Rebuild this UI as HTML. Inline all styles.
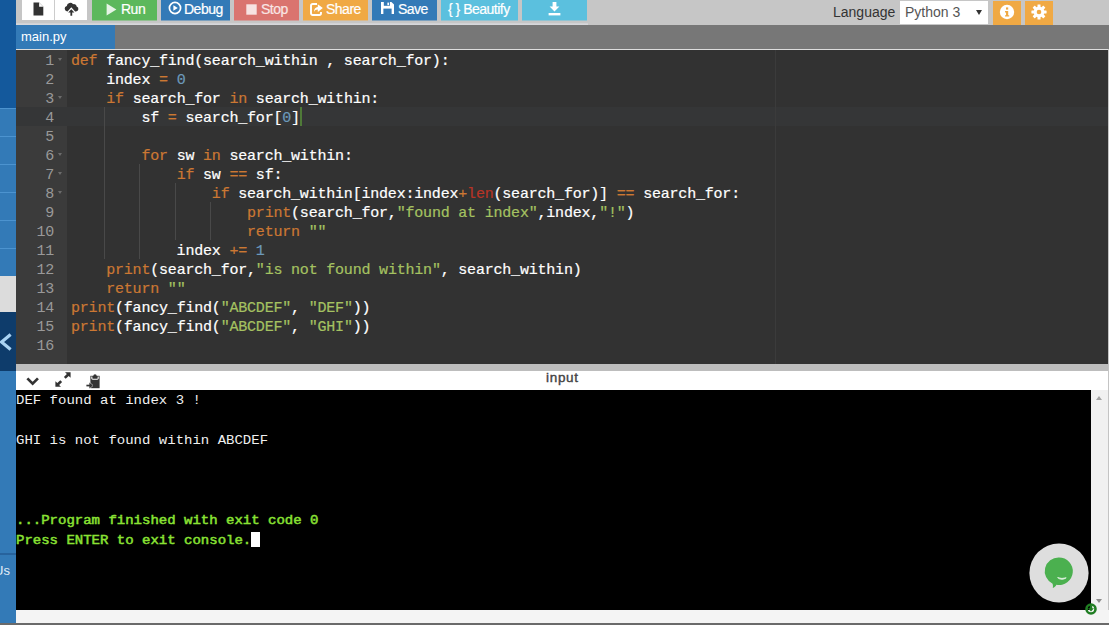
<!DOCTYPE html>
<html lang="en">
<head>
<meta charset="utf-8">
<title>main.py - Online Python 3 IDE</title>
<style>
html,body{margin:0;padding:0;}
body{width:1109px;height:625px;overflow:hidden;position:relative;background:#c6c6c6;font-family:"Liberation Sans",Arial,sans-serif;font-size:14px;color:#333;}
.abs{position:absolute;}
/* sidebar */
#side{left:0;top:0;width:16px;height:625px;background:#14599c;overflow:hidden;}
#side div{position:absolute;left:0;width:16px;}
/* toolbar */
#tb{left:16px;top:0;width:1093px;height:25px;background:#c6c6c6;}
.btn{position:absolute;top:-10px;height:30px;box-sizing:border-box;color:#fff;font-size:14px;letter-spacing:-0.5px;line-height:38px;-webkit-text-stroke:0.2px;white-space:nowrap;}
.btn svg{position:absolute;}
.btn span{position:absolute;top:0;}
/* tabs */
#tabs{left:16px;top:25px;width:1093px;height:24px;background:#777;}
#tab1{left:0;top:0;width:99px;height:24px;background:#337ab7;color:#fff;font-size:13px;line-height:23px;}
/* editor */
#ed{left:16px;top:49px;width:1092px;height:315px;background:#323232;overflow:hidden;border-top:1px solid #ddd;box-sizing:border-box;}
#gut{left:0;top:0;width:51px;height:314px;background:#3b3b3b;}
.ln{position:absolute;left:0;width:38px;text-align:right;height:19px;line-height:19px;margin-top:2px;color:#999;font-family:"Liberation Mono","DejaVu Sans Mono",monospace;font-size:15px;letter-spacing:-0.2px;}
.cl{position:absolute;left:55px;height:19px;line-height:19px;margin-top:2px;color:#fff;font-family:"Liberation Mono","DejaVu Sans Mono",monospace;font-size:15px;letter-spacing:-0.2px;white-space:pre;-webkit-text-stroke:0.2px;}
.k{color:#cc7833;}.n{color:#6c99bb;}.s{color:#a5c261;}.f{color:#b83426;}
.ig{position:absolute;width:1px;background:#494949;}
.fold{position:absolute;left:42px;width:0;height:0;border-left:2.700px solid transparent;border-right:2.700px solid transparent;border-top:3.500px solid #6c6c6c;}
/* console */
#split{left:16px;top:364px;width:1092px;height:7px;background:#bdbdbd;}
#ctb{left:16px;top:371px;width:1093px;height:19px;background:#fff;}
#con{left:16px;top:390px;width:1075px;height:220px;background:#000;color:#f0f0f0;font-family:"Liberation Mono",monospace;font-size:14px;}
.row{position:absolute;left:0;margin-top:1px;height:20px;line-height:21px;white-space:pre;font-size:12px;transform:scaleX(1.1667);transform-origin:0 0;}
.g{color:#8ae234;-webkit-text-stroke:0.45px #8ae234;}
#sb{left:1091px;top:390px;width:17px;height:220px;background:#f1f1f1;}
#bot{left:16px;top:610px;width:1093px;height:13px;background:#f4f4f4;}
#botbar{left:0;top:623px;width:1109px;height:2px;background:#6a6a6a;}
</style>
</head>
<body>
<!-- SIDEBAR -->
<div id="side" class="abs">
  <div style="top:108px;height:169px;background:#337ab7;box-shadow:0 1px 0 #7ca0be;"></div>
  <div style="top:108px;height:1px;background:#4c93cf;"></div>
  <div style="top:136px;height:1px;background:#4c93cf;"></div>
  <div style="top:164px;height:1px;background:#4c93cf;"></div>
  <div style="top:192px;height:1px;background:#4c93cf;"></div>
  <div style="top:220px;height:1px;background:#4c93cf;"></div>
  <div style="top:248px;height:1px;background:#4c93cf;"></div>
  <div style="top:276px;height:36px;background:#dcdcdc;"></div>
  <div style="top:312px;height:59px;background:#0e3c6b;"></div>
  <svg style="position:absolute;left:0;top:332px" width="14" height="20" viewBox="0 0 14 20"><path d="M10.600 2.600L1.600 10L10.600 17.400" fill="none" stroke="#a9d3f3" stroke-width="3.200"/></svg>
  <div style="top:371px;height:252px;background:#337ab7;box-shadow:0 1px 0 #7ca0be;"></div>
  <div style="top:553px;height:2px;background:#27639d;"></div>
  <div style="top:561px;left:-6px;width:22px;color:#e4eef8;font-size:13px;line-height:20px;">Us</div>
</div>

<!-- TOOLBAR -->
<div id="tb" class="abs">
  <div class="abs" style="left:0;top:23px;width:572px;height:2px;background:linear-gradient(#cfcfd2,#d9dade);"></div>
  <!-- coordinates inside #tb are page-x minus 16 -->
  <div class="btn" style="left:6px;width:33px;background:#fff;">
    <svg style="left:11px;top:12px" width="11" height="14" viewBox="0 0 11 14"><path d="M0.5 0.5h5.6l4.2 4.2v8.8h-9.8z" fill="#333"/><path d="M6.1 0.5v4.2h4.2z" fill="#fff"/></svg>
  </div>
  <div class="btn" style="left:38px;width:33px;background:#fff;border-left:1px solid #ccc;">
    <svg style="left:9px;top:12px" width="15" height="15" viewBox="0 0 15 15"><path d="M3.200 9.400a2.800 2.800 0 0 1-.4-5.500a3.500 3.500 0 0 1 6.300-1.700a2.700 2.700 0 0 1 3.500 2.300a2.500 2.500 0 0 1-.6 4.900h-.9l-3.800-4.200l-3.800 4.200z" fill="#333"/><path d="M7.300 7.200l3.100 3.300h-2.200v3.300h-1.800v-3.300h-2.200z" fill="#333"/></svg>
  </div>
  <div class="btn" style="left:76px;width:65px;background:#5cb85c;box-shadow:0 1px 0 #91bf91;">
    <svg style="left:14px;top:13px" width="11" height="13" viewBox="0 0 11 13"><path d="M0.6 0.6L10.4 6.5L0.6 12.4z" fill="#e6f4e6"/></svg>
    <span style="left:29px">Run</span>
  </div>
  <div class="btn" style="left:145px;width:69px;background:#337ab7;box-shadow:0 1px 0 #7ca0be;">
    <svg style="left:6.500px;top:11.300px" width="14" height="14" viewBox="0 0 14 14"><circle cx="7" cy="7" r="5.6" fill="none" stroke="#fff" stroke-width="1.7"/><path d="M5.4 4.2L9.8 7L5.4 9.8z" fill="#fff"/></svg>
    <span style="left:23px">Debug</span>
  </div>
  <div class="btn" style="left:218px;width:65px;background:#da746f;box-shadow:0 1px 0 #d09d9a;">
    <svg style="left:12px;top:14px" width="11" height="11" viewBox="0 0 11 11"><rect x="0.3" y="0.3" width="10.4" height="10.4" fill="#f7e3e2"/></svg>
    <span style="left:27px;color:#f9e6e5">Stop</span>
  </div>
  <div class="btn" style="left:287px;width:65px;background:#f0a944;box-shadow:0 1px 0 #dbb98a;">
    <svg style="left:6.500px;top:12.600px" width="13" height="13" viewBox="0 0 13 13"><path d="M11 9v1.300a1.700 1.700 0 0 1-1.700 1.700h-6.600a1.700 1.700 0 0 1-1.700-1.700v-7.600a1.700 1.700 0 0 1 1.700-1.700h4.300" fill="none" stroke="#fff" stroke-width="1.900"/><path d="M7.800 1.300L12.800 5.100L7.800 8.900v-2.300c-1.900 0-3 .7-3.800 2.500c0-3.100 1.300-4.900 3.800-5.200z" fill="#fff"/></svg>
    <span style="left:23px">Share</span>
  </div>
  <div class="btn" style="left:356px;width:65px;background:#337ab7;box-shadow:0 1px 0 #7ca0be;">
    <svg style="left:9px;top:12px" width="13" height="12" viewBox="0 0 12 12" preserveAspectRatio="none"><path d="M0 0h9.6L12 2.4V12H0z" fill="#fff"/><rect x="2.6" y="0" width="5.6" height="3.8" fill="#337ab7"/><rect x="5.9" y="0.6" width="1.5" height="2.6" fill="#fff"/><rect x="2.2" y="6.6" width="7.6" height="5.4" fill="#337ab7"/><rect x="2.2" y="6.6" width="7.6" height="5.4" fill="#fff" opacity=".0"/></svg>
    <span style="left:26px">Save</span>
  </div>
  <div class="btn" style="left:425px;width:77px;background:#5bc0de;box-shadow:0 1px 0 #90c3d2;">
    <span style="left:7px">{ } Beautify</span>
  </div>
  <div class="btn" style="left:506px;width:65px;background:#5bc0de;box-shadow:0 1px 0 #90c3d2;">
    <svg style="left:25.500px;top:11.600px" width="13" height="14" viewBox="0 0 13 14"><path d="M4.6 0h3.8v4.6h3L6.5 9.6L1.6 4.6h3z" fill="#fff"/><rect x="0.6" y="11" width="11.8" height="2.4" fill="#fff"/></svg>
  </div>
  <span class="abs" style="left:817px;top:0;line-height:24px;font-size:14px;color:#333;">Language</span>
  <div class="abs" style="left:884px;top:1px;width:88px;height:23px;background:#fff;border-radius:0;">
    <span class="abs" style="left:5px;top:-1px;line-height:24px;font-size:14px;color:#555;">Python 3</span>
    <div class="abs" style="left:76px;top:8.500px;width:0;height:0;border-left:3px solid transparent;border-right:3px solid transparent;border-top:5.500px solid #333;"></div>
  </div>
  <div class="btn" style="left:977px;top:1px;height:24px;width:28px;background:#f0a944;">
    <svg style="left:6px;top:3px" width="16" height="16" viewBox="0 0 16 16"><circle cx="8" cy="8" r="7.2" fill="#fff"/><rect x="7" y="3.4" width="2.2" height="2.2" fill="#f0a944"/><path d="M6 7h3.2v4.2h1v1.4H6v-1.4h1v-2.8H6z" fill="#f0a944"/></svg>
  </div>
  <div class="btn" style="left:1009px;top:1px;height:24px;width:28px;background:#f0a944;">
    <svg style="left:6px;top:3px" width="16" height="16" viewBox="-8 -8 16 16"><g fill="#fff"><circle r="5.4"/><rect x="-1.5" y="-7.6" width="3" height="15.2" rx=".4"/><rect x="-1.5" y="-7.6" width="3" height="15.2" rx=".4" transform="rotate(45)"/><rect x="-1.5" y="-7.6" width="3" height="15.2" rx=".4" transform="rotate(90)"/><rect x="-1.5" y="-7.6" width="3" height="15.2" rx=".4" transform="rotate(135)"/></g><circle r="2.3" fill="#f0a944"/></svg>
  </div>
</div>

<!-- TABS -->
<div id="tabs" class="abs"><div id="tab1" class="abs"><span style="margin-left:5px;">main.py</span></div></div>

<!-- EDITOR -->
<div id="ed" class="abs">
  <div class="abs" style="left:0;top:57px;width:1092px;height:19px;background:#353637;"></div>
  <div id="gut" class="abs"></div>
  <div class="abs" style="left:0;top:57px;width:51px;height:19px;background:#353637;"></div>
  <div class="abs" style="left:759px;top:0;width:1px;height:314px;background:#3b3b3b;"></div>
  <div class="ln" style="top:0px">1</div>
  <div class="fold" style="top:8px"></div>
  <div class="cl" style="top:0px"><span class="k">def</span> fancy_find(search_within , search_for):</div>
  <div class="ln" style="top:19px">2</div>
  <div class="cl" style="top:19px">    index <span class="k">=</span> <span class="n">0</span></div>
  <div class="ln" style="top:38px">3</div>
  <div class="fold" style="top:46px"></div>
  <div class="cl" style="top:38px">    <span class="k">if</span> search_for <span class="k">in</span> search_within:</div>
  <div class="ln" style="top:57px">4</div>
  <div class="cl" style="top:57px">        sf <span class="k">=</span> search_for[<span class="n">0</span>]</div>
  <div class="ig" style="left:88px;top:57px;height:19px"></div>
  <div class="ln" style="top:76px">5</div>
  <div class="ig" style="left:88px;top:76px;height:19px"></div>
  <div class="ln" style="top:95px">6</div>
  <div class="fold" style="top:103px"></div>
  <div class="cl" style="top:95px">        <span class="k">for</span> sw <span class="k">in</span> search_within:</div>
  <div class="ig" style="left:88px;top:95px;height:19px"></div>
  <div class="ln" style="top:114px">7</div>
  <div class="fold" style="top:122px"></div>
  <div class="cl" style="top:114px">            <span class="k">if</span> sw <span class="k">==</span> sf:</div>
  <div class="ig" style="left:88px;top:114px;height:19px"></div>
  <div class="ig" style="left:123px;top:114px;height:19px"></div>
  <div class="ln" style="top:133px">8</div>
  <div class="fold" style="top:141px"></div>
  <div class="cl" style="top:133px">                <span class="k">if</span> search_within[index:index<span class="k">+</span><span class="f">len</span>(search_for)] <span class="k">==</span> search_for:</div>
  <div class="ig" style="left:88px;top:133px;height:19px"></div>
  <div class="ig" style="left:123px;top:133px;height:19px"></div>
  <div class="ig" style="left:159px;top:133px;height:19px"></div>
  <div class="ln" style="top:152px">9</div>
  <div class="cl" style="top:152px">                    <span class="k">print</span>(search_for,<span class="s">"found at index"</span>,index,<span class="s">"!"</span>)</div>
  <div class="ig" style="left:88px;top:152px;height:19px"></div>
  <div class="ig" style="left:123px;top:152px;height:19px"></div>
  <div class="ig" style="left:159px;top:152px;height:19px"></div>
  <div class="ig" style="left:194px;top:152px;height:19px"></div>
  <div class="ln" style="top:171px">10</div>
  <div class="cl" style="top:171px">                    <span class="k">return</span> <span class="s">""</span></div>
  <div class="ig" style="left:88px;top:171px;height:19px"></div>
  <div class="ig" style="left:123px;top:171px;height:19px"></div>
  <div class="ig" style="left:159px;top:171px;height:19px"></div>
  <div class="ig" style="left:194px;top:171px;height:19px"></div>
  <div class="ln" style="top:190px">11</div>
  <div class="cl" style="top:190px">            index <span class="k">+=</span> <span class="n">1</span></div>
  <div class="ig" style="left:88px;top:190px;height:19px"></div>
  <div class="ig" style="left:123px;top:190px;height:19px"></div>
  <div class="ln" style="top:209px">12</div>
  <div class="cl" style="top:209px">    <span class="k">print</span>(search_for,<span class="s">"is not found within"</span>, search_within)</div>
  <div class="ln" style="top:228px">13</div>
  <div class="cl" style="top:228px">    <span class="k">return</span> <span class="s">""</span></div>
  <div class="ln" style="top:247px">14</div>
  <div class="cl" style="top:247px"><span class="k">print</span>(fancy_find(<span class="s">"ABCDEF"</span>, <span class="s">"DEF"</span>))</div>
  <div class="ln" style="top:266px">15</div>
  <div class="cl" style="top:266px"><span class="k">print</span>(fancy_find(<span class="s">"ABCDEF"</span>, <span class="s">"GHI"</span>))</div>
  <div class="ln" style="top:285px">16</div>
  <div class="abs" style="left:284px;top:57px;width:2px;height:19px;background:#4f7a38;"></div>
</div>

<!-- CONSOLE -->
<div id="split" class="abs"></div>
<div id="ctb" class="abs">
  <svg class="abs" style="left:10px;top:5.5px" width="14" height="10" viewBox="0 0 14 10"><path d="M1.350 1.350L6.650 6.650L11.950 1.350" fill="none" stroke="#333" stroke-width="2.700"/></svg>
  <svg class="abs" style="left:39px;top:1px" width="16" height="15" viewBox="0 0 16 15"><g fill="#333"><path d="M15.6 0.2v5.6l-1.9-1.9l-3 2.900l-1.800-1.800l3-2.900l-1.900-1.900z"/><path d="M0.400 14.800v-5.600l1.900 1.900l3-2.900l1.800 1.800l-3 2.900l1.900 1.900z"/></g></svg>
  <svg class="abs" style="left:69.5px;top:2.500px" width="15" height="15" viewBox="0 0 15 15"><g fill="#333"><circle cx="9" cy="1.900" r="1.700"/><rect x="4.400" y="1.800" width="9.200" height="12.400"/></g><path d="M5.800 2.400v1.900q0 .9 .9 .9h4.600q.9 0 .9-.9v-1.900" fill="none" stroke="#fff" stroke-width="1.100"/><path d="M3.400 8.400l3.500 3.100l-3.500 3.100z" fill="#333" stroke="#fff" stroke-width="1" paint-order="stroke"/><rect x="0.400" y="10.700" width="3.600" height="1.700" fill="#333"/></svg>
  <span class="abs" style="left:530px;top:-2px;font-size:13.5px;letter-spacing:.7px;line-height:18px;color:#444;-webkit-text-stroke:0.4px;">input</span>
</div>
<div id="con" class="abs">
<div class="row" style="top:0px">DEF found at index 3 !</div>
<div class="row" style="top:40px">GHI is not found within ABCDEF</div>
<div class="row g" style="top:120px">...Program finished with exit code 0</div>
<div class="row g" style="top:140px">Press ENTER to exit console.</div>
<div class="abs" style="left:235px;top:142px;width:9px;height:15px;background:#fff;"></div>
</div>
<div id="sb" class="abs">
  <div class="abs" style="left:5px;top:6px;width:0;height:0;border-left:3.5px solid transparent;border-right:3.5px solid transparent;border-bottom:4px solid #a3a3a3;"></div>
  <div class="abs" style="left:5px;top:209px;width:0;height:0;border-left:3.5px solid transparent;border-right:3.5px solid transparent;border-top:4px solid #8c8c8c;"></div>
</div>
<div class="abs" style="left:1108px;top:49px;width:1px;height:576px;background:#c4c4c4;"></div>
<div id="bot" class="abs"></div>
<div id="botbar" class="abs"></div>
<!-- chat widget -->
<svg class="abs" style="left:1029px;top:543px" width="60" height="60" viewBox="0 0 60 60">
  <circle cx="30" cy="30" r="29.600" fill="#dedede"/>
  <path d="M30 14.400a13.800 13.800 0 1 1-2.600 27.350c-.9 1.700-2 2.700-3.600 3.300c.3-1.500 .3-2.900-.2-4.400a13.800 13.800 0 0 1 6.400-26.250z" fill="#4bb04f"/>
  <path d="M28.600 34.600q4 3.400 8.600 .2q-4.200 1.400-8.600-.2z" fill="#e8f5e8" stroke="#e8f5e8" stroke-width=".8"/>
</svg>
<svg class="abs" style="left:1084px;top:602px" width="14" height="14" viewBox="0 0 14 14">
  <circle cx="7" cy="7" r="4.500" fill="none" stroke="#1f7d22" stroke-width="2.600"/>
  <path d="M5.800 3.600h2.400v2.600h1.800l-3 3.200l-3-3.200h1.800z" fill="#1f7d22"/>
</svg>
</body>
</html>
